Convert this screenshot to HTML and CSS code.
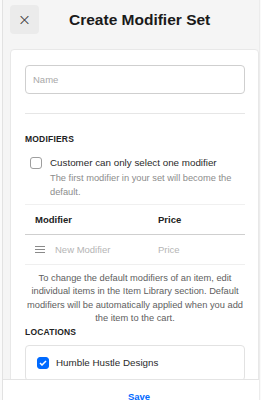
FILE: index.html
```html
<!DOCTYPE html>
<html lang="en">
<head>
    <meta charset="UTF-8">
    <meta name="viewport" content="width=device-width, initial-scale=1.0">
    <title>Create Modifier Set</title>
    <link rel="stylesheet" href="styles.css">
</head>
<body>

<div class="panel">
    <div class="header">
        <button class="close-btn" type="button">&times;</button>
        <h1>Create Modifier Set</h1>
    </div>

    <div class="content">
        <div class="card">
            <input class="name-input" type="text" placeholder="Name">

            <hr class="divider">

            <h3 class="section-title">Modifiers</h3>

            <label class="check-row">
                <span class="checkbox"></span>
                <span class="check-text">
                    <span class="check-label">Customer can only select one modifier</span>
                    <span class="check-help">The first modifier in your set will become the default.</span>
                </span>
            </label>

            <div class="table-head">
                <span class="col-name">Modifier</span>
                <span class="col-price">Price</span>
            </div>

            <div class="table-row">
                <span class="drag">
                    <svg width="10" height="7" viewBox="0 0 10 7">
                        <path d="M0 0.5H10M0 3.5H10M0 6.5H10" stroke="#8a8a8a" stroke-width="1"/>
                    </svg>
                </span>
                <span class="col-name placeholder">New Modifier</span>
                <span class="col-price placeholder">Price</span>
            </div>

            <p class="note">To change the default modifiers of an item, edit individual items in the Item Library section. Default modifiers will be automatically applied when you add the item to the cart.</p>

            <h3 class="section-title">Locations</h3>

            <div class="location-box">
                <span class="checkbox checked">
                    <svg width="8" height="6" viewBox="0 0 8 6">
                        <path d="M1 3L3 5L7 1" fill="none" stroke="#fff" stroke-width="1.5"/>
                    </svg>
                </span>
                <span class="location-name">Humble Hustle Designs</span>
            </div>
        </div>
    </div>

    <div class="footer">
        <button class="save-btn" type="button">Save</button>
    </div>
</div>

</body>
</html>
```

FILE: styles.css
```css
* {
    margin: 0;
    padding: 0;
    box-sizing: border-box;
}

body {
    font-family: "Liberation Sans", Arial, sans-serif;
    background-color: #fafafa;
    color: #1f1f1f;
    height: 100vh;
    overflow: hidden;
}

.panel {
    margin-left: 2px;
    width: 258px;
    height: 100vh;
    border-left: 1px solid #e2e2e2;
    border-right: 1px solid #ececec;
    background-color: #f5f5f5;
    display: flex;
    flex-direction: column;
}

.header {
    height: 41px;
    flex-shrink: 0;
    display: flex;
    align-items: center;
    padding: 0 0 2px 7px;
    gap: 30px;
}

.close-btn {
    width: 29px;
    height: 29px;
    border: none;
    border-radius: 4px;
    background-color: #ebebeb;
    color: #333;
    font-size: 16px;
    line-height: 29px;
    font-family: "DejaVu Sans", sans-serif;
    font-weight: 300;
}

h1 {
    font-size: 15.5px;
    font-weight: 700;
    color: #1a1a1a;
}

.content {
    flex: 1;
    overflow: hidden;
    padding: 8px 0 0 7px;
}

.card {
    width: 249px;
    background-color: #fff;
    border: 1px solid #e8e8e8;
    border-radius: 4px;
    padding: 15px 14px 20px 14px;
}

.name-input {
    display: block;
    width: 220px;
    height: 29px;
    border: 1px solid #cfcfcf;
    border-radius: 4px;
    padding: 0 7px;
    font-family: inherit;
    font-size: 9.5px;
}

.name-input::placeholder {
    color: #a8a8a8;
}

.divider {
    border: none;
    border-top: 1px solid #e6e6e6;
    width: 220px;
    margin: 19px 0 0 0;
}

.section-title {
    font-size: 8.5px;
    font-weight: 700;
    text-transform: uppercase;
    letter-spacing: 0.2px;
    color: #222;
    margin-top: 20px;
}

.check-row {
    display: flex;
    gap: 8px;
    padding: 13px 0 5px 5px;
    width: 220px;
    border-bottom: 1px solid #f0f0f0;
}

.checkbox {
    width: 12px;
    height: 12px;
    flex-shrink: 0;
    border: 1px solid #9e9e9e;
    border-radius: 3px;
    display: flex;
    align-items: center;
    justify-content: center;
}

.checkbox.checked {
    background-color: #006aff;
    border-color: #006aff;
}

.check-text {
    display: flex;
    flex-direction: column;
}

.check-label {
    font-size: 9.8px;
    color: #2a2a2a;
    line-height: 12px;
}

.check-help {
    font-size: 9.3px;
    color: #8c8c8c;
    line-height: 13.5px;
    margin-top: 3px;
}

.table-head,
.table-row {
    display: flex;
    align-items: center;
    width: 220px;
    padding-left: 10px;
}

.table-head {
    height: 30px;
    border-bottom: 1px solid #cfcfcf;
    font-size: 9.5px;
    font-weight: 700;
    color: #222;
}

.table-row {
    height: 30px;
    border-bottom: 1px solid #efefef;
    font-size: 9.5px;
}

.table-head .col-name {
    width: 123px;
}

.drag {
    width: 20px;
    display: flex;
}

.table-row .col-name {
    width: 103px;
}

.placeholder {
    color: #b5b5b5;
}

.note {
    width: 220px;
    text-align: center;
    font-size: 9.3px;
    line-height: 13.4px;
    color: #5e5e5e;
    padding-top: 7px;
}

.note + .section-title {
    margin-top: 1px;
}

.location-box {
    display: flex;
    align-items: center;
    gap: 7px;
    width: 220px;
    height: 36px;
    margin-top: 8px;
    padding-left: 11px;
    border: 1px solid #e2e2e2;
    border-radius: 4px;
}

.location-name {
    font-size: 9.8px;
    color: #2a2a2a;
}

.footer {
    height: 21px;
    flex-shrink: 0;
    background-color: #fff;
    border-top: 1px solid #e4e4e4;
    text-align: center;
    overflow: hidden;
}

.save-btn {
    border: none;
    background: none;
    color: #006aff;
    font-family: inherit;
    font-size: 9.5px;
    font-weight: 700;
    margin-top: 11px;
    margin-left: 16px;
}
```
